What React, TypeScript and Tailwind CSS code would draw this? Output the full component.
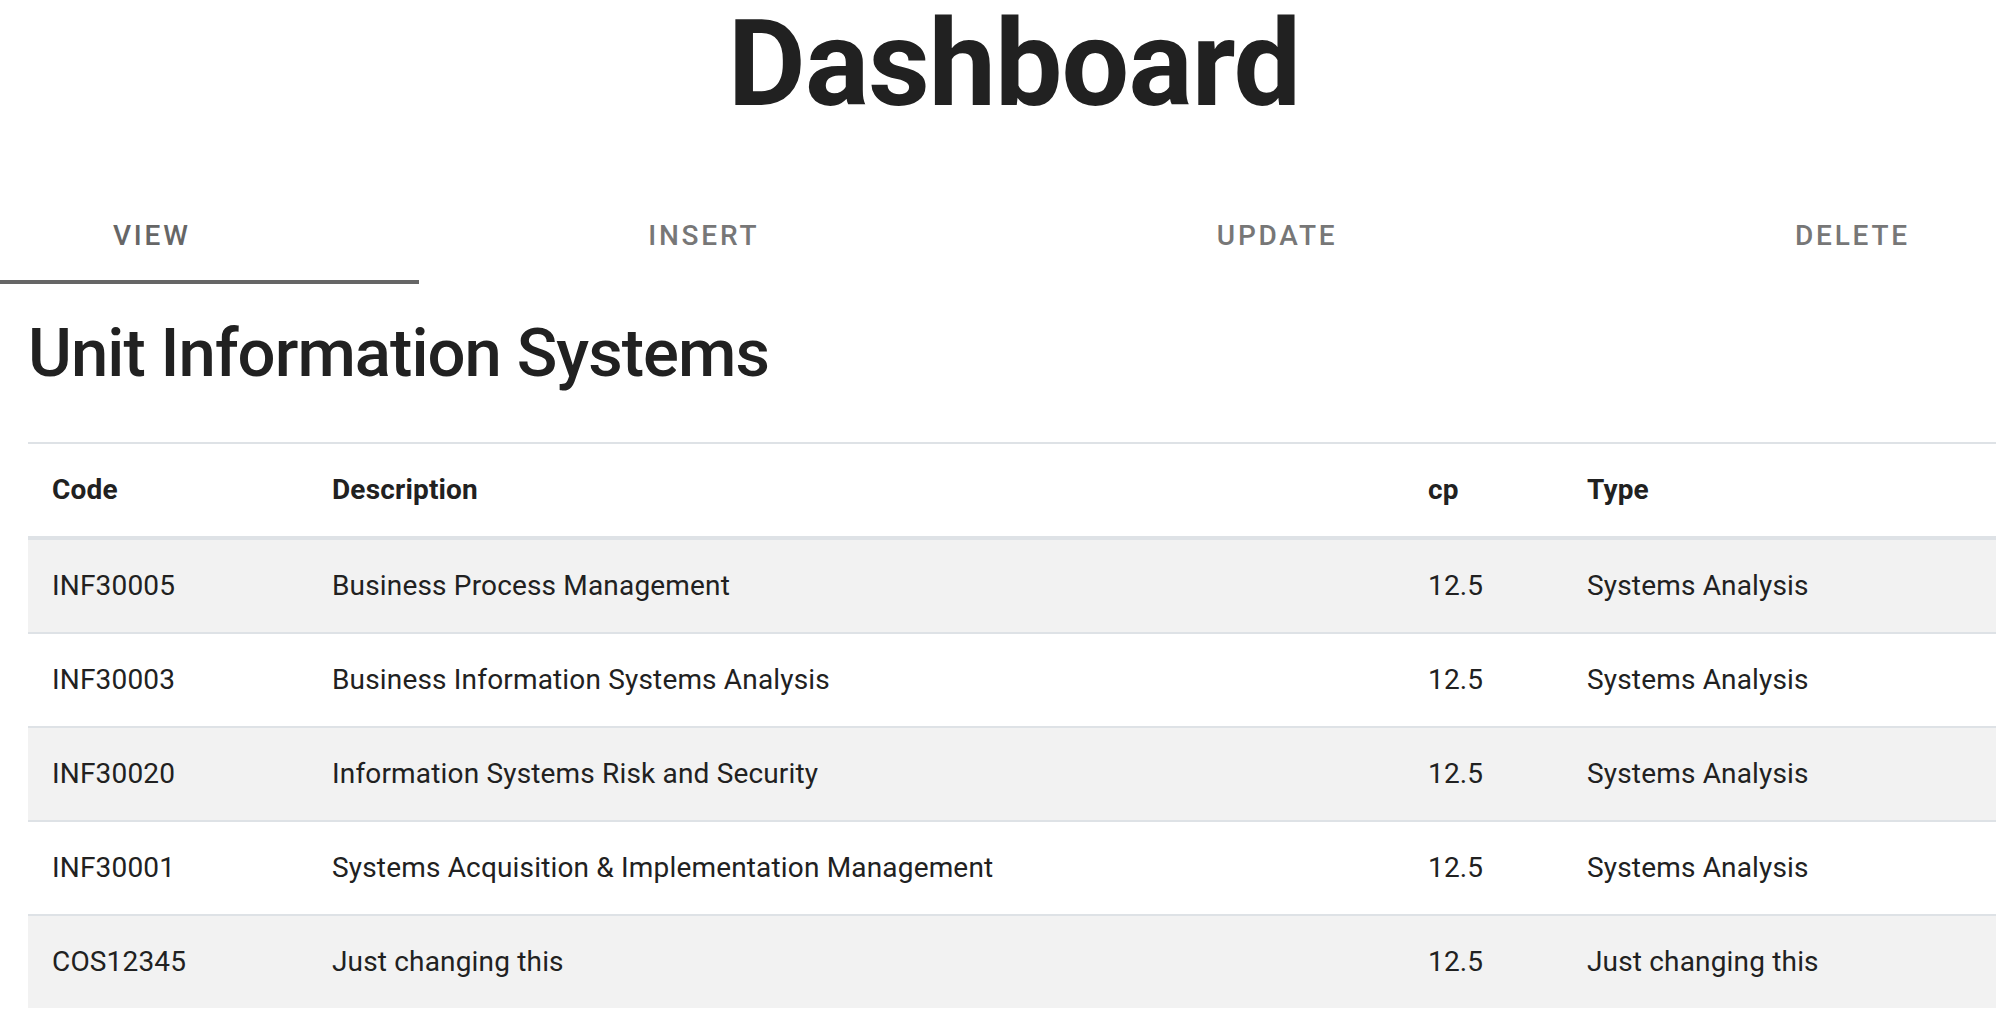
const tabs = ["View", "Insert", "Update", "Delete"];

const units = [
	{ code: "INF30005", description: "Business Process Management", cp: "12.5", type: "Systems Analysis" },
	{ code: "INF30003", description: "Business Information Systems Analysis", cp: "12.5", type: "Systems Analysis" },
	{ code: "INF30020", description: "Information Systems Risk and Security", cp: "12.5", type: "Systems Analysis" },
	{ code: "INF30001", description: "Systems Acquisition & Implementation Management", cp: "12.5", type: "Systems Analysis" },
	{ code: "COS12345", description: "Just changing this", cp: "12.5", type: "Just changing this" }
];

export default function App() {
	return (
		<main className="min-h-screen w-full bg-white font-['Roboto','Liberation_Sans',sans-serif] text-[#212121]">
			<h1 className="mt-[-5px] pl-[26px] text-center text-[120px] leading-[1.15] font-bold tracking-[-0.008em]">
				Dashboard
			</h1>

			<nav className="relative mt-[55px] flex h-[96px] items-center justify-between pr-[92px] pl-[113px]">
				{tabs.map((tab, i) => (
					<button
						key={tab}
						className={`text-[28px] font-medium tracking-[0.1em] uppercase ${i === 0 ? "text-[#666666]" : "text-[#777777]"}`}
					>
						{tab}
					</button>
				))}
				<span className="absolute bottom-0 left-0 h-[4px] w-[419px] bg-[#666666]" />
			</nav>

			<section className="pl-[28px]">
				<h2 className="mt-[27px] text-[67px] leading-[84px] font-medium tracking-[-0.014em]">Unit Information Systems</h2>

				<table className="mt-[47px] w-[1968px] table-fixed border-collapse text-left text-[28px] leading-[44px] tracking-[0.006em]">
					<colgroup>
						<col className="w-[280px]" />
						<col className="w-[1096px]" />
						<col className="w-[159px]" />
						<col className="w-[433px]" />
					</colgroup>
					<thead>
						<tr>
							{["Code", "Description", "cp", "Type"].map(h => (
								<th key={h} className="border-t-2 border-b-4 border-[#dee2e6] px-6 py-6 font-bold">
									{h}
								</th>
							))}
						</tr>
					</thead>
					<tbody>
						{units.map((u, i) => (
							<tr key={u.code} className={i % 2 === 0 ? "bg-[#f2f2f2]" : "bg-white"}>
								<td className="border-t-2 border-[#dee2e6] px-6 py-6">{u.code}</td>
								<td className="border-t-2 border-[#dee2e6] px-6 py-6">{u.description}</td>
								<td className="border-t-2 border-[#dee2e6] px-6 py-6">{u.cp}</td>
								<td className="border-t-2 border-[#dee2e6] px-6 py-6">{u.type}</td>
							</tr>
						))}
					</tbody>
				</table>
			</section>
		</main>
	);
}
